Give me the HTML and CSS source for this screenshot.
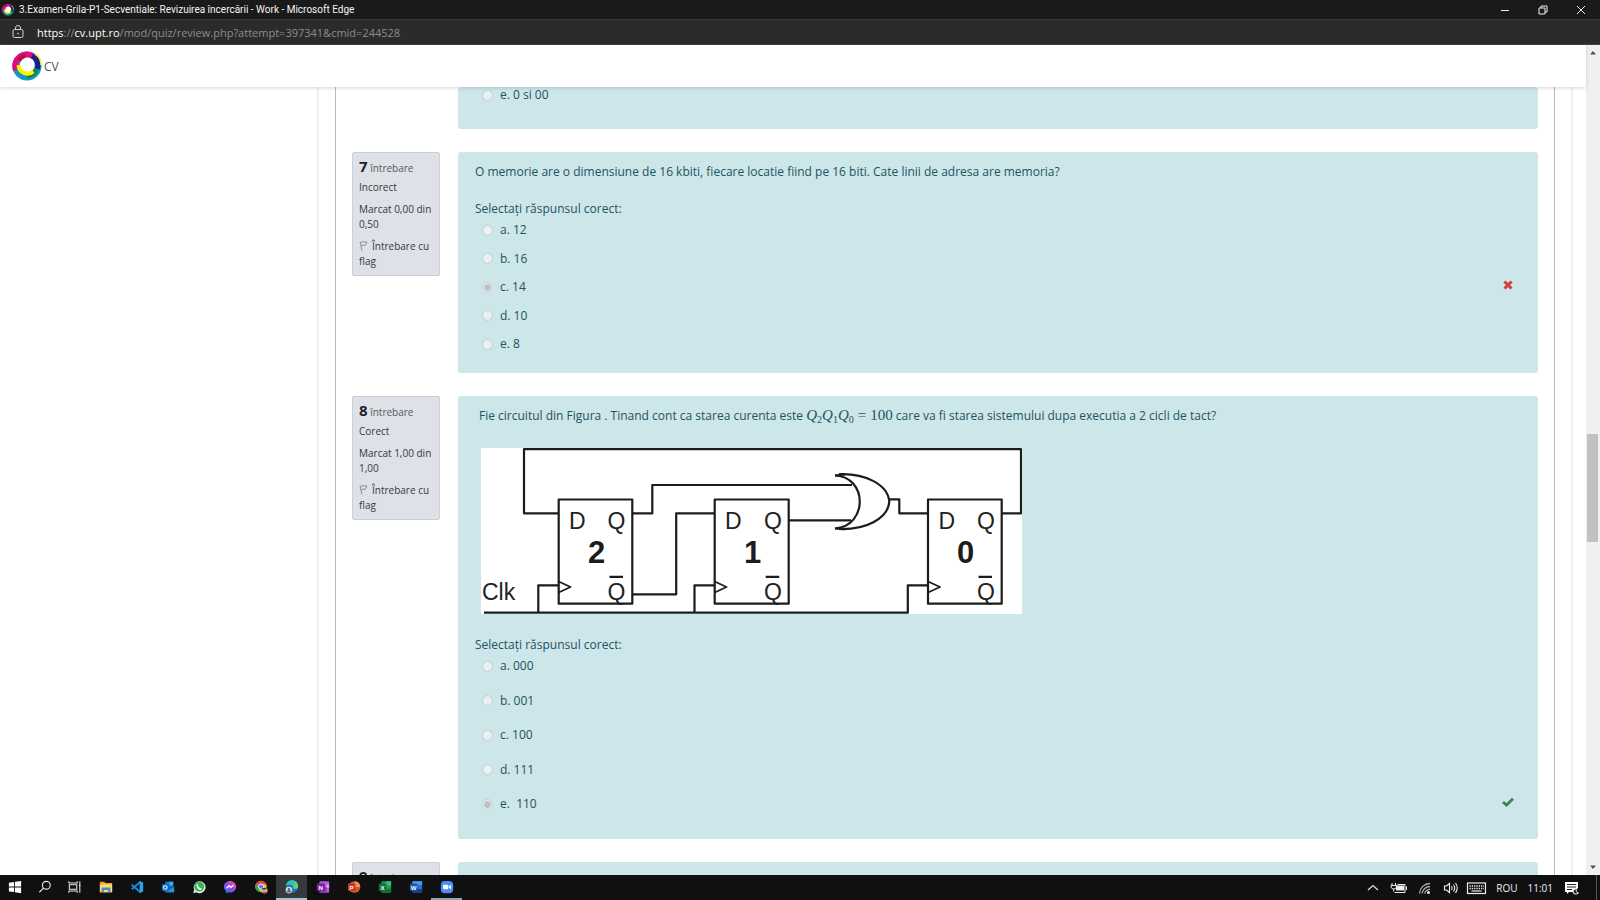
FILE: index.html
```html
<!DOCTYPE html>
<html lang="ro">
<head>
<meta charset="utf-8">
<title>3.Examen-Grila-P1-Secventiale: Revizuirea încercării</title>
<link rel="stylesheet" href="styles.css">
</head>
<body>
<svg class="defs" aria-hidden="true">
  <defs>
    <symbol id="logo" viewBox="0 0 30 30">
      <circle cx="15" cy="15" r="11" fill="none" stroke="#1596c4" stroke-width="7"/>
      <path d="M4 19A11.500 11.500 0 0 1 22 6" fill="none" stroke="#e5087e" stroke-width="6"/>
      <path d="M7 9A11 11 0 0 1 13 5" fill="none" stroke="#b3102e" stroke-width="4"/>
      <path d="M20 5A11 11 0 0 1 25.500 18" fill="none" stroke="#1c1f7c" stroke-width="5"/>
      <path d="M24.500 18A11 11 0 0 1 15 25" fill="none" stroke="#0b8a4b" stroke-width="5"/>
      <path d="M7 14A8.500 8.500 0 0 0 21 20" fill="none" stroke="#fff200" stroke-width="5"/>
      <path d="M23 3Q29 6 29 14" fill="none" stroke="#f4ee3a" stroke-width="1.500"/>
      <circle cx="15.500" cy="13.500" r="7" fill="#fff"/>
    </symbol>
    <symbol id="flag" viewBox="0 0 9 10">
      <path d="M1 1L3 9.500M1 1.500Q4 0 8 1.200L6 4.500Q4 3.500 2 5" fill="none" stroke="#8a8f94" stroke-width="1"/>
    </symbol>
  </defs>
</svg>

<header class="titlebar">
  <svg class="favicon" viewBox="0 0 30 30"><use href="#logo"/></svg>
  <span class="window-title">3.Examen-Grila-P1-Secventiale: Revizuirea încercării - Work - Microsoft Edge</span>
  <div class="window-controls">
    <button type="button" aria-label="Minimize"><svg viewBox="0 0 10 10"><path d="M1 5.500H9"/></svg></button>
    <button type="button" aria-label="Restore"><svg viewBox="0 0 10 10"><path d="M1 3H7V9H1ZM3 3V1H9V7H7"/></svg></button>
    <button type="button" aria-label="Close"><svg viewBox="0 0 10 10"><path d="M1 1L9 9M9 1L1 9"/></svg></button>
  </div>
</header>
<div class="addressbar">
  <svg class="lock" viewBox="0 0 12 14"><rect x="1" y="4.500" width="10" height="8" rx="1.500"/><path d="M3.500 4.500V3A2.500 2.500 0 0 1 8.500 3V4.500"/><circle cx="6" cy="8.500" r=".5"/></svg>
  <span class="url"><b>https</b>://<b>cv.upt.ro</b>/mod/quiz/review.php?attempt=397341&amp;cmid=244528</span>
</div>

<div class="viewport">
  <div class="page">
    <nav class="navbar">
      <a class="brand" href="#"><svg class="logo" viewBox="0 0 30 30"><use href="#logo"/></svg>CV</a>
    </nav>
    <div class="content">
      <aside class="drawer"></aside>
      <div class="region">
        <main class="quiz">
          <section class="question">
            <div class="formulation previous">
              <div class="answers">
                <div class="answer"><input type="radio" name="q6" id="q6e" disabled><label for="q6e">e. 0 si 00</label></div>
              </div>
            </div>
          </section>

          <section class="question">
            <div class="info">
              <h3><span class="no">7</span> întrebare</h3>
              <p>Incorect</p>
              <p>Marcat 0,00 din 0,50</p>
              <a href="#"><svg class="flag" viewBox="0 0 9 10"><use href="#flag"/></svg>Întrebare cu flag</a>
            </div>
            <div class="formulation">
              <p class="text">O memorie are o dimensiune de 16 kbiti, fiecare locatie fiind pe 16 biti. Cate linii de adresa are memoria?</p>
              <p class="prompt">Selectați răspunsul corect:</p>
              <div class="answers short">
                <div class="answer"><input type="radio" name="q7" id="q7a" disabled><label for="q7a">a. 12</label></div>
                <div class="answer"><input type="radio" name="q7" id="q7b" disabled><label for="q7b">b. 16</label></div>
                <div class="answer"><input type="radio" name="q7" id="q7c" disabled checked><label for="q7c">c. 14</label>
                  <svg class="mark" viewBox="0 0 12 12"><path d="M3.500 3.500L8.500 8.500M8.500 3.500L3.500 8.500" stroke="#cf3f3b" stroke-width="3" stroke-linecap="square"/></svg></div>
                <div class="answer"><input type="radio" name="q7" id="q7d" disabled><label for="q7d">d. 10</label></div>
                <div class="answer"><input type="radio" name="q7" id="q7e" disabled><label for="q7e">e. 8</label></div>
              </div>
            </div>
          </section>

          <section class="question">
            <div class="info">
              <h3><span class="no">8</span> întrebare</h3>
              <p>Corect</p>
              <p>Marcat 1,00 din 1,00</p>
              <a href="#"><svg class="flag" viewBox="0 0 9 10"><use href="#flag"/></svg>Întrebare cu flag</a>
            </div>
            <div class="formulation tall">
              <p class="text indent">Fie circuitul din Figura . Tinand cont ca starea curenta este <span class="math"><i>Q</i><sub>2</sub><i>Q</i><sub>1</sub><i>Q</i><sub>0</sub><span class="eq">=</span>100</span> care va fi starea sistemului dupa executia a 2 cicli de tact?</p>
              <svg class="circuit" viewBox="481 448 541 166" role="img" aria-label="Circuit">
                <rect x="481" y="448" width="541" height="166" fill="#fff"/>
                <g fill="none" stroke="#1c1c1c" stroke-width="2.200" stroke-linejoin="round">
                  <path d="M558.700 513.300H524V449.200H1021V513.300H1001.700"/>
                  <path d="M632.300 513.300H652.300V485H852"/>
                  <path d="M632.300 594.300H676.200V513.300H714.700"/>
                  <path d="M788.700 520.300H851"/>
                  <path d="M889 499.300H899.300V513.300H928"/>
                  <path d="M484 612.700H907.800V585.300H928M538.300 612.700V585.300H558.700M694.500 612.700V585.300H714.700"/>
                  <path d="M558.700 499.500H632.300V603.700H558.700ZM714.700 499.500H788.700V603.700H714.700ZM928 499.500H1001.700V603.700H928Z"/>
                  <path d="M835 475.500C868 477 868 526 835 528.500M839 474.200C864 473 888 484 889.300 501.700C888 519 865 530 839 529"/>
                  <path d="M835 475.500L845 474.300M835 528.500L845 529.200"/>
                  <path d="M558.700 581.500L570.500 587L558.700 592.500M714.700 581.500L726.500 587L714.700 592.500M928 581.500L940 587L928 592.500" stroke-width="1.800"/>
                  <path d="M609.500 576.800H623M765.700 576.800H779.200M978.500 576.800H992"/>
                </g>
                <g class="pin">
                  <text x="482" y="599.500">Clk</text>
                  <text x="569" y="529">D</text><text x="607.500" y="529">Q</text><text x="607.500" y="599.500">Q</text>
                  <text x="725" y="529">D</text><text x="764" y="529">Q</text><text x="764" y="599.500">Q</text>
                  <text x="938.500" y="529">D</text><text x="977" y="529">Q</text><text x="977" y="599.500">Q</text>
                </g>
                <g class="stage">
                  <text x="596.500" y="562.500">2</text><text x="752.500" y="562.500">1</text><text x="965.500" y="562.500">0</text>
                </g>
              </svg>
              <p class="prompt">Selectați răspunsul corect:</p>
              <div class="answers long">
                <div class="answer"><input type="radio" name="q8" id="q8a" disabled><label for="q8a">a. 000</label></div>
                <div class="answer"><input type="radio" name="q8" id="q8b" disabled><label for="q8b">b. 001</label></div>
                <div class="answer"><input type="radio" name="q8" id="q8c" disabled><label for="q8c">c. 100</label></div>
                <div class="answer"><input type="radio" name="q8" id="q8d" disabled><label for="q8d">d. 111</label></div>
                <div class="answer"><input type="radio" name="q8" id="q8e" disabled checked><label for="q8e">e.&nbsp; 110</label>
                  <svg class="mark" viewBox="0 0 12 12"><path d="M1 6L4.500 9L11 2.800" fill="none" stroke="#3b8549" stroke-width="2.800"/></svg></div>
              </div>
            </div>
          </section>

          <section class="question">
            <div class="info"><h3><span class="no">9</span> întrebare</h3></div>
            <div class="formulation"></div>
          </section>
        </main>
      </div>
    </div>
  </div>
  <div class="scrollbar" aria-hidden="true">
    <svg viewBox="0 0 14 16"><path d="M4 9.500L7 6L10 9.500Z" fill="#505050"/></svg>
    <div class="thumb"></div>
    <svg viewBox="0 0 14 16"><path d="M4 6.500L7 10L10 6.500Z" fill="#505050"/></svg>
  </div>
</div>

<footer class="taskbar">
  <div class="system">
    <button type="button" aria-label="Start"><svg viewBox="0 0 16 16"><path fill="#fff" d="M1 3L7 2.200V7.500H1ZM8 2L15 1V7.500H8ZM1 8.500H7V13.800L1 13ZM8 8.500H15V15L8 14Z"/></svg></button>
    <button type="button" aria-label="Search"><svg viewBox="0 0 16 16"><g fill="none" stroke="#e8e8e8" stroke-width="1.300"><circle cx="9.500" cy="6" r="4.500"/><path d="M6.300 9.300L1.500 14"/></g></svg></button>
    <button type="button" aria-label="Task view"><svg viewBox="0 0 16 16"><path d="M1 1.500V3.500H10.500V1.500M1.500 5.500H10V10.500H1.500ZM1 14.500V12.500H10.500V14.500M13.500 1.500V14.500M12.500 6H14.500" fill="none" stroke="#e8e8e8" stroke-width="1.200"/></svg></button>
  </div>
  <div class="apps">
    <button type="button" aria-label="File Explorer"><svg viewBox="0 0 16 16"><path fill="#e9a825" d="M1 2H6L7.500 3.500H15V14H1Z"/><path fill="#ffd969" d="M1 5H15V14H1Z"/><path fill="#3b8fd0" d="M3 8.500H13V14H10.500V11.500H5.500V14H3Z"/></svg></button>
    <button type="button" aria-label="Visual Studio Code"><svg viewBox="0 0 16 16"><path d="M12 2L2 10.500M12 14L2 5.500" stroke="#1689d2" stroke-width="2.400"/><path fill="#2ba3ee" d="M11 1L15 2.800V13.200L11 15Z"/></svg></button>
    <button type="button" aria-label="Outlook"><svg viewBox="0 0 16 16"><path fill="#1680cf" d="M5 2H14V8H5Z"/><path fill="#35b1ea" d="M9.500 2H14V6H9.500Z"/><path fill="#1260ad" d="M4 8L15 7V14H4Z"/><path fill="#2a94db" d="M5 14L15 8V14Z"/><rect x="1" y="4.500" width="8" height="8" rx="1" fill="#0f65b8"/><circle cx="5" cy="8.500" r="2" fill="none" stroke="#fff" stroke-width="1.200"/></svg></button>
    <button type="button" aria-label="WhatsApp"><svg viewBox="0 0 16 16"><path fill="#e8f5ea" d="M1.500 15L2.500 11A6.800 6.800 0 1 1 5 14Z"/><circle cx="8.300" cy="7.800" r="5.700" fill="#3bb455"/><path d="M6 5C5.500 8 8 10.800 11 10.500" stroke="#fff" stroke-width="1.800" fill="none"/></svg></button>
    <button type="button" aria-label="Messenger"><svg viewBox="0 0 16 16"><defs><linearGradient id="msg" x1="0" y1="1" x2="1" y2="0"><stop offset="0" stop-color="#1688ff"/><stop offset=".55" stop-color="#a23bf0"/><stop offset="1" stop-color="#ff6968"/></linearGradient></defs><path fill="url(#msg)" d="M8 1C12 1 15 3.900 15 7.700S12 14.300 8 14.300L6.500 14.100L3.500 15V12.500C2 11.300 1 9.700 1 7.700C1 3.900 4 1 8 1Z"/><path d="M4 9.500L7 6.500L9 8.500L12 6" fill="none" stroke="#fff" stroke-width="1.500"/></svg></button>
    <button type="button" aria-label="Chrome"><svg viewBox="0 0 16 16"><circle cx="8" cy="7.500" r="6.500" fill="#f5c52c"/><path fill="#df4434" d="M2.200 4.500A6.500 6.500 0 0 1 14 5H8L5 9Z"/><path fill="#2fa150" d="M2.200 4.500L6 10.500L8 14A6.500 6.500 0 0 1 2.200 4.500Z"/><circle cx="8" cy="7.500" r="3" fill="#4285f4" stroke="#fff"/><circle cx="12" cy="12" r="3.500" fill="#d9b4a0"/><path fill="#47302b" d="M8.700 11A3.500 3.500 0 0 1 15 10.500Z"/><path fill="#c53b36" d="M9 13.500H15L12 15.500Z"/></svg></button>
    <button type="button" class="active" aria-label="Microsoft Edge"><svg viewBox="0 0 16 16"><circle cx="8" cy="7.500" r="7" fill="#1877c2"/><path fill="#35c1b0" d="M1 7A7 7 0 0 1 15 7C15 10.500 9 11 9.500 8.500C9 5 4 4 1 7Z"/><path fill="#68d36a" d="M10 1A7 7 0 0 1 15 7C15 10.500 9 11 9.500 8.500C12 7 12 3 10 1Z"/><circle cx="4.500" cy="11.500" r="3.800" fill="#c7d3da"/><circle cx="4.500" cy="10.300" r="1.300" fill="#56636c"/><path fill="#56636c" d="M2 14A2.500 2.500 0 0 1 7 14Z"/></svg></button>
    <button type="button" aria-label="OneNote"><svg viewBox="0 0 16 16"><rect x="4" y="1.500" width="11" height="13" rx="1" fill="#b558dc"/><path fill="#8933b5" d="M4 8H12V14.500H4Z"/><path fill="#e09cf4" d="M12 5H15V9H12Z"/><rect x="1" y="4" width="9" height="8.500" rx="1" fill="#7a20a8"/><text x="5.500" y="11">N</text></svg></button>
    <button type="button" aria-label="PowerPoint"><svg viewBox="0 0 16 16"><circle cx="8.500" cy="8" r="6.700" fill="#d6532e"/><path fill="#f08e6b" d="M8.500 1.300A6.700 6.700 0 0 1 15.200 8H8.500Z"/><rect x="1" y="4" width="8.500" height="8.500" rx="1" fill="#bd3a1b"/><text x="5.200" y="11">P</text></svg></button>
    <button type="button" aria-label="Excel"><svg viewBox="0 0 16 16"><rect x="4" y="1.500" width="11" height="13" rx="1" fill="#219b61"/><path fill="#38bd79" d="M9.500 1.500H15V6H9.500Z"/><path fill="#176a3d" d="M4 10H15V14.500H4Z"/><rect x="1" y="4" width="8.500" height="8.500" rx="1" fill="#107038"/><text x="5.200" y="11">X</text></svg></button>
    <button type="button" aria-label="Word"><svg viewBox="0 0 16 16"><rect x="4" y="1.500" width="11" height="13" rx="1" fill="#2870c9"/><path fill="#45a0eb" d="M4 1.500H15V5.500H4Z"/><path fill="#163f87" d="M4 10.500H15V14.500H4Z"/><rect x="1" y="4" width="8.500" height="8.500" rx="1" fill="#1b52a8"/><text x="5.200" y="11">W</text></svg></button>
    <button type="button" class="open" aria-label="Zoom"><svg viewBox="0 0 16 16"><rect x="1" y="1" width="14" height="14" rx="4.500" fill="#4a8df6"/><rect x="3.500" y="5.500" width="6" height="5" rx="1" fill="#fff"/><path fill="#fff" d="M10 7.300L12.700 5.500V10.500L10 8.700Z"/></svg></button>
  </div>
  <div class="tray">
    <svg viewBox="0 0 22 16"><path d="M6 10L11 5.500L16 10" fill="none" stroke="#ddd" stroke-width="1.300"/></svg>
    <svg viewBox="0 0 22 16"><path fill="#eee" d="M8 5.500H16V10.500H8Z"/><path d="M6.500 12.500H17V4.500H9.500M18.500 6.500V10M4 3V5.500M7.500 3V5.500M3 5.500H8.500V7Q8 9 5.700 9Q3.500 9 3 7ZM5.700 9V11.500" fill="none" stroke="#eee" stroke-width="1"/></svg>
    <svg viewBox="0 0 22 16"><g fill="none" stroke="#aaa" stroke-width="1.300"><path d="M5.500 13.500A10.500 10.500 0 0 1 16 3.500M8 13.500A8 8 0 0 1 16 6.500M10.700 13.500A5.500 5.500 0 0 1 16 9.300"/></g><circle cx="14.500" cy="12.500" r="1.500" fill="#eee"/></svg>
    <svg viewBox="0 0 22 16"><path d="M4.500 6H6.500L9.500 3.500V12.500L6.500 10H4.500ZM11.500 6Q13 8 11.500 10M13.500 4.500Q16 8 13.500 11.500M15.500 3Q19 8 15.500 13" fill="none" stroke="#eee" stroke-width="1.100"/></svg>
    <svg class="keyboard" viewBox="0 0 22 16"><rect x="1.500" y="3" width="18" height="10.500" fill="none" stroke="#eee" stroke-width="1.200"/><path d="M3.500 6H18M3.500 8.500H18" stroke="#eee" stroke-width="1.300" stroke-dasharray="1.300 1"/><path d="M5.500 11H15.500" stroke="#eee" stroke-width="1.200"/></svg>
    <span class="lang">ROU</span>
    <time class="clock">11:01</time>
    <svg class="notice" viewBox="0 0 16 16"><path fill="#fff" d="M1 2H14V8L10 12H5L3 14V12H1Z"/><path d="M3 4.500H12M3 7H12M3 9.500H8" stroke="#222"/><path d="M9.500 13.500A3.500 3.500 0 0 1 12.500 8.500A3 3 0 0 0 14.500 13Q12 15 9.500 13.500Z" fill="#222" stroke="#eee"/></svg>
    <span class="desktop"></span>
  </div>
</footer>
</body>
</html>
```
FILE: styles.css
```css
* { box-sizing: border-box; }
body {
  margin: 0;
  height: 100vh;
  display: flex;
  flex-direction: column;
  overflow: hidden;
  font-family: "Open Sans", "Noto Sans", sans-serif;
  font-size: 12px;
  background: #fff;
}
p, h3 { margin: 0; font-weight: 400; }
button { border: 0; padding: 0; background: none; }
.defs { position: absolute; width: 0; height: 0; }

.titlebar {
  flex: 0 0 19px;
  display: flex;
  align-items: center;
  padding-left: 2px;
  background: #1a1a1a;
  color: #f4f4f4;
  font-family: Roboto, sans-serif;
  font-size: 10px;
}
.favicon { width: 12px; height: 12px; margin-right: 5px; }
.window-title { flex: 1; }
.window-controls { display: flex; height: 100%; }
.window-controls button { width: 38px; display: grid; place-items: center; }
.window-controls svg { width: 10px; height: 10px; fill: none; stroke: #eee; stroke-width: 1; }

.addressbar {
  flex: 0 0 26px;
  display: flex;
  align-items: center;
  gap: 13px;
  padding-left: 12px;
  background: #2b2b2b;
  border-top: 1px solid #3a3a3a;
  border-bottom: 1px solid #444;
  color: #8d8d8d;
  font-size: 11px;
}
.addressbar b { font-weight: 400; color: #fff; }
.lock { width: 12px; height: 14px; fill: none; stroke: #d4d4d4; stroke-width: 1; }

.viewport { flex: 1; min-height: 0; display: flex; }
.page { flex: 1; min-width: 0; display: flex; flex-direction: column; }
.navbar {
  flex: 0 0 42px;
  display: flex;
  align-items: center;
  padding-left: 12px;
  background: #fff;
  box-shadow: 0 1px 4px rgba(0, 0, 0, .16);
  z-index: 1;
}
.brand { display: flex; align-items: center; gap: 2px; color: #555; text-decoration: none; }
.logo { width: 30px; height: 30px; }

.content { flex: 1; min-height: 0; display: flex; overflow: hidden; }
.drawer { flex: 0 0 317px; }
.region {
  flex: 1;
  margin-right: 13px;
  padding: 0 16px;
  border: solid #efefef;
  border-width: 0 2px;
}
.quiz {
  min-height: 100%;
  display: flex;
  flex-direction: column;
  gap: 23px;
  padding: 0 16px;
  border: solid #bbb;
  border-width: 0 1px;
}
.question {
  display: grid;
  grid-template-columns: 88px minmax(0, 1fr);
  gap: 18px;
  align-items: start;
}
.info {
  padding: 5px 0 6px 6px;
  border: 1px solid #cacfd6;
  border-radius: 2px;
  background: #dee1e7;
  color: #343a40;
  font-size: 10px;
  line-height: 15px;
}
.info h3 { font-size: 10px; line-height: 16px; margin-bottom: 4px; color: #555b61; }
.info .no { font-size: 15px; font-weight: 700; color: #1d2125; }
.info p { margin-bottom: 7px; }
.info a { display: block; padding-right: 6px; color: inherit; text-decoration: none; }
.flag { width: 9px; height: 10px; margin-right: 4px; vertical-align: -1px; }

.formulation {
  grid-column: 2;
  min-height: 100px;
  padding: 10px 17px 18px;
  border-radius: 3px;
  background: #cde6ea;
  color: #24525f;
  line-height: 20px;
}
.formulation.tall { padding-bottom: 24px; }
.formulation.previous { min-height: 0; padding: 0 17px 26px; }
.previous .answer { height: 16px; }
.text { margin-bottom: 17px; }
.indent { padding-left: 4px; margin-bottom: 22px; }
.answers { display: flex; flex-direction: column; justify-content: space-between; }
.short { height: 136px; }
.long { height: 160px; }
.answer { display: flex; align-items: center; height: 22px; padding: 0 7px; }
.answer input {
  appearance: none;
  flex: none;
  width: 11px;
  height: 11px;
  margin: 0 7px 0 0;
  border: 1px solid #c4ced0;
  border-radius: 50%;
  background: #e9f1f3;
}
.answer input:checked { background: radial-gradient(circle, #bdc1c3 0 3px, #e9f1f3 4px); }
.mark { width: 12px; height: 12px; margin-left: auto; margin-bottom: 4px; }
.math { font-family: "Liberation Serif", serif; font-size: 15px; line-height: 0; }
.math sub { font-size: 10px; line-height: 0; vertical-align: -3px; }
.math .eq { margin: 0 4px; }
.circuit { display: block; width: 541px; height: 166px; margin: 0 0 21px 6px; }
.pin text { font: 23px "Liberation Sans", sans-serif; fill: #222; }
.stage text { font: bold 31px "Liberation Sans", sans-serif; fill: #1c1c1c; text-anchor: middle; }

.scrollbar {
  flex: 0 0 14px;
  display: grid;
  grid-template-rows: 16px 373fr 108px 317fr 16px;
  background: #f0f0f0;
}
.thumb { grid-row: 3; margin: 0 2px 0 1px; background: #c1c1c1; }
.scrollbar svg { width: 14px; height: 16px; }
.scrollbar svg:last-child { grid-row: 5; }

.taskbar {
  flex: 0 0 25px;
  display: flex;
  align-items: stretch;
  background: #101010;
  color: #eee;
  font-size: 10px;
}
.system, .apps, .tray { display: flex; }
.taskbar button { display: grid; place-items: center; border-bottom: 2px solid transparent; padding-top: 1px; }
.system button { width: 30px; }
.apps button { width: 31px; }
.taskbar button svg { width: 14px; height: 14px; }
.taskbar button.active { background: #353a3d; border-color: #a9c3d4; }
.taskbar button.open { border-color: #8fa5b4; }
.apps text { font: bold 7px "Liberation Sans", sans-serif; fill: #fff; text-anchor: middle; }
.tray { margin-left: auto; align-items: center; }
.tray svg { width: 22px; height: 16px; margin-right: 4px; }
.tray .keyboard { margin-right: 8px; }
.lang { margin-right: 10px; }
.clock { margin-right: 11px; }
.tray .notice { width: 16px; margin-right: 16px; }
.desktop { align-self: stretch; width: 4px; border-left: 1px solid #555; }
```
